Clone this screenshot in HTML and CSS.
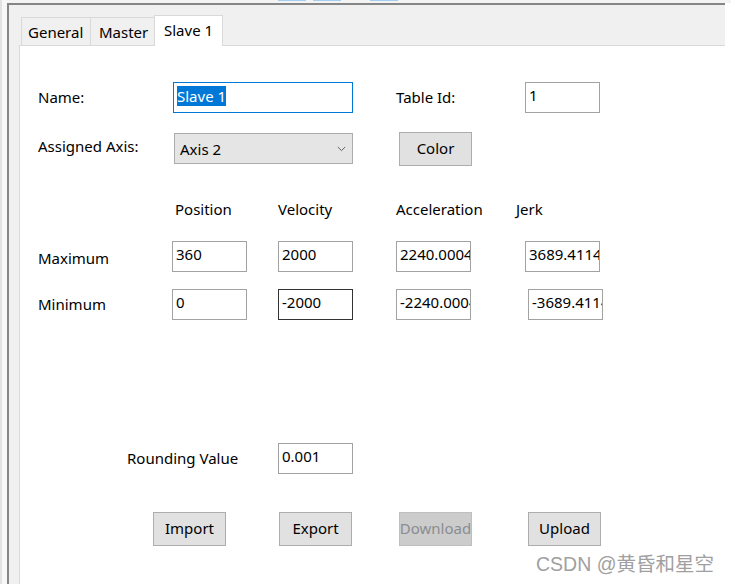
FILE: index.html
```html
<!DOCTYPE html>
<html lang="en">
<head>
<meta charset="utf-8">
<title>Slave 1</title>
<link rel="stylesheet" href="styles.css">
</head>
<body>
<div class="topstrip"><i class="sel s1"></i><i class="sel s2"></i><i class="sel s3"></i></div>
<div class="window">
  <div class="tabs">
    <div class="tab t-general">General</div>
    <div class="tab t-master">Master</div>
    <div class="tab active">Slave 1</div>
  </div>
  <div class="panel">
    <div class="row r-name">
      <span class="lbl l-name">Name:</span>
      <div class="tb focus w-name"><span class="selected">Slave 1</span></div>
      <span class="lbl l-tid">Table Id:</span>
      <div class="tb">1</div>
    </div>
    <div class="row r-axis">
      <span class="lbl l-axis">Assigned Axis:</span>
      <div class="combo">
        <span>Axis 2</span>
        <svg class="chev" width="9" height="6" viewBox="0 0 9 6"><path d="M0.8 1 L4.5 4.6 L8.2 1" fill="none" stroke="#606060" stroke-width="1"/></svg>
      </div>
      <div class="btn b-color">Color</div>
    </div>
    <div class="row r-head">
      <span class="h h-pos">Position</span>
      <span class="h h-vel">Velocity</span>
      <span class="h h-acc">Acceleration</span>
      <span class="h">Jerk</span>
    </div>
    <div class="row r-max">
      <span class="lbl l-max">Maximum</span>
      <div class="tb">360</div>
      <div class="tb g-vel">2000</div>
      <div class="tb g-acc">2240.0004</div>
      <div class="tb g-jerk">3689.4114</div>
    </div>
    <div class="row r-min">
      <span class="lbl l-min">Minimum</span>
      <div class="tb">0</div>
      <div class="tb g-vel dark">-2000</div>
      <div class="tb g-acc">-2240.0004</div>
      <div class="tb g-jerk2">-3689.4114</div>
    </div>
    <div class="row r-round">
      <span class="lbl l-round">Rounding Value</span>
      <div class="tb">0.001</div>
    </div>
    <div class="row r-btns">
      <div class="btn b-import">Import</div>
      <div class="btn b-export">Export</div>
      <div class="btn disabled b-down">Download</div>
      <div class="btn b-up">Upload</div>
    </div>
  </div>
</div>
<div class="watermark">CSDN @黄昏和星空</div>
</body>
</html>
```

FILE: styles.css
```css
* { box-sizing: border-box; }

html, body {
  margin: 0;
  height: 584px;
  overflow: hidden;
}

body {
  background: linear-gradient(to right, #e2e2e2 0, #e2e2e2 2px, #f7f7f7 2px, #f7f7f7 7px, #ffffff 7px);
  font-family: "Noto Sans", "Liberation Sans", sans-serif;
  font-size: 15px;
  color: #000;
  position: relative;
}

.topstrip {
  height: 3px;
  display: flex;
  align-items: flex-start;
  background: #f3f3f3;
  margin-left: 7px;
}

.sel {
  display: block;
  height: 1px;
  width: 28px;
  background: #a5cdef;
}
.s1 { margin-left: 271px; }
.s2 { margin-left: 7px; }
.s3 { margin-left: 29px; }

.window {
  margin-left: 7px;
  width: 718px;
  height: 581px;
  border-top: 2px solid #858585;
  border-left: 2px solid #858585;
  background: #f0f0f0;
  padding-left: 10px;
  display: flex;
  flex-direction: column;
}

.tabs {
  height: 40px;
  display: flex;
  align-items: flex-end;
  padding-left: 2px;
  flex: none;
}

.tab {
  height: 28px;
  border-left: 1px solid #d9d9d9;
  border-top: 1px solid #d9d9d9;
  background: #f0f0f0;
  display: flex;
  align-items: center;
  line-height: 20px;
  white-space: nowrap;
}
.t-general { width: 69px; padding-left: 6px; }
.t-master { width: 64px; padding-left: 8px; }

.tab.active {
  width: 69px;
  height: 31px;
  padding-left: 9px;
  padding-bottom: 2px;
  margin-bottom: -1px;
  background: #fff;
  border-right: 1px solid #d9d9d9;
  position: relative;
  z-index: 1;
}

.panel {
  flex: 1;
  background: #fff;
  border-left: 1px solid #d9d9d9;
  border-top: 1px solid #d9d9d9;
  padding-left: 18px;
}

.row {
  display: flex;
  align-items: flex-start;
}

.lbl {
  line-height: 20px;
  white-space: nowrap;
  flex: none;
}

.tb {
  flex: none;
  width: 75px;
  height: 31px;
  border: 1px solid #a2a2a2;
  background: #fff;
  padding: 2px 3px 0 3px;
  line-height: 20px;
  white-space: nowrap;
  overflow: hidden;
}
.tb.focus { border-color: #0078d7; padding-top: 3px; }
.tb.dark { border-color: #333; }
.w-name { width: 180px; }

.selected {
  background: #0078d7;
  color: #fff;
  display: inline-block;
}

/* row 1 */
.r-name { margin-top: 36px; height: 31px; }
.l-name { width: 135px; padding-top: 5px; }
.l-tid { width: 129px; margin-left: 43px; padding-top: 5px; }

/* row 2 */
.r-axis { margin-top: 19px; height: 34px; }
.l-axis { width: 136px; padding-top: 4px; }

.combo {
  flex: none;
  width: 179px;
  height: 31px;
  margin-top: 1px;
  background: #e5e5e5;
  border: 1px solid #acacac;
  display: flex;
  align-items: center;
  padding-left: 5px;
  padding-right: 6px;
  line-height: 20px;
}
.chev { margin-left: auto; display: block; }

.btn {
  flex: none;
  width: 73px;
  height: 34px;
  background: #e1e1e1;
  border: 1px solid #adadad;
  display: flex;
  align-items: center;
  justify-content: center;
  padding-bottom: 3px;
  line-height: 20px;
  white-space: nowrap;
  overflow: hidden;
}
.b-color { margin-left: 46px; }

.btn.disabled {
  background: #cccccc;
  border-color: #bfbfbf;
  color: #8a8c90;
}

/* header */
.r-head { margin-top: 33px; line-height: 20px; }
.h { white-space: nowrap; flex: none; }
.h-pos { margin-left: 137px; width: 103px; }
.h-vel { width: 118px; }
.h-acc { width: 120px; }

/* max / min */
.r-max { margin-top: 22px; }
.l-max { width: 134px; padding-top: 7px; }
.r-min { margin-top: 17px; }
.l-min { width: 134px; padding-top: 5px; }
.g-vel { margin-left: 31px; }
.g-acc { margin-left: 43px; }
.g-jerk { margin-left: 54px; }
.g-jerk2 { margin-left: 57px; }

/* rounding */
.r-round { margin-top: 123px; }
.l-round { width: 151px; margin-left: 89px; padding-top: 5px; }

/* buttons */
.r-btns { margin-top: 38px; }
.b-import { margin-left: 115px; }
.b-export { margin-left: 53px; }
.b-down { margin-left: 47px; }
.b-up { margin-left: 56px; }

.watermark {
  position: absolute;
  left: 536px;
  top: 554px;
  font-family: "Liberation Sans", "Noto Sans CJK SC", sans-serif;
  font-size: 19.5px;
  line-height: 20px;
  color: #a0a0a0;
  white-space: nowrap;
}
```
